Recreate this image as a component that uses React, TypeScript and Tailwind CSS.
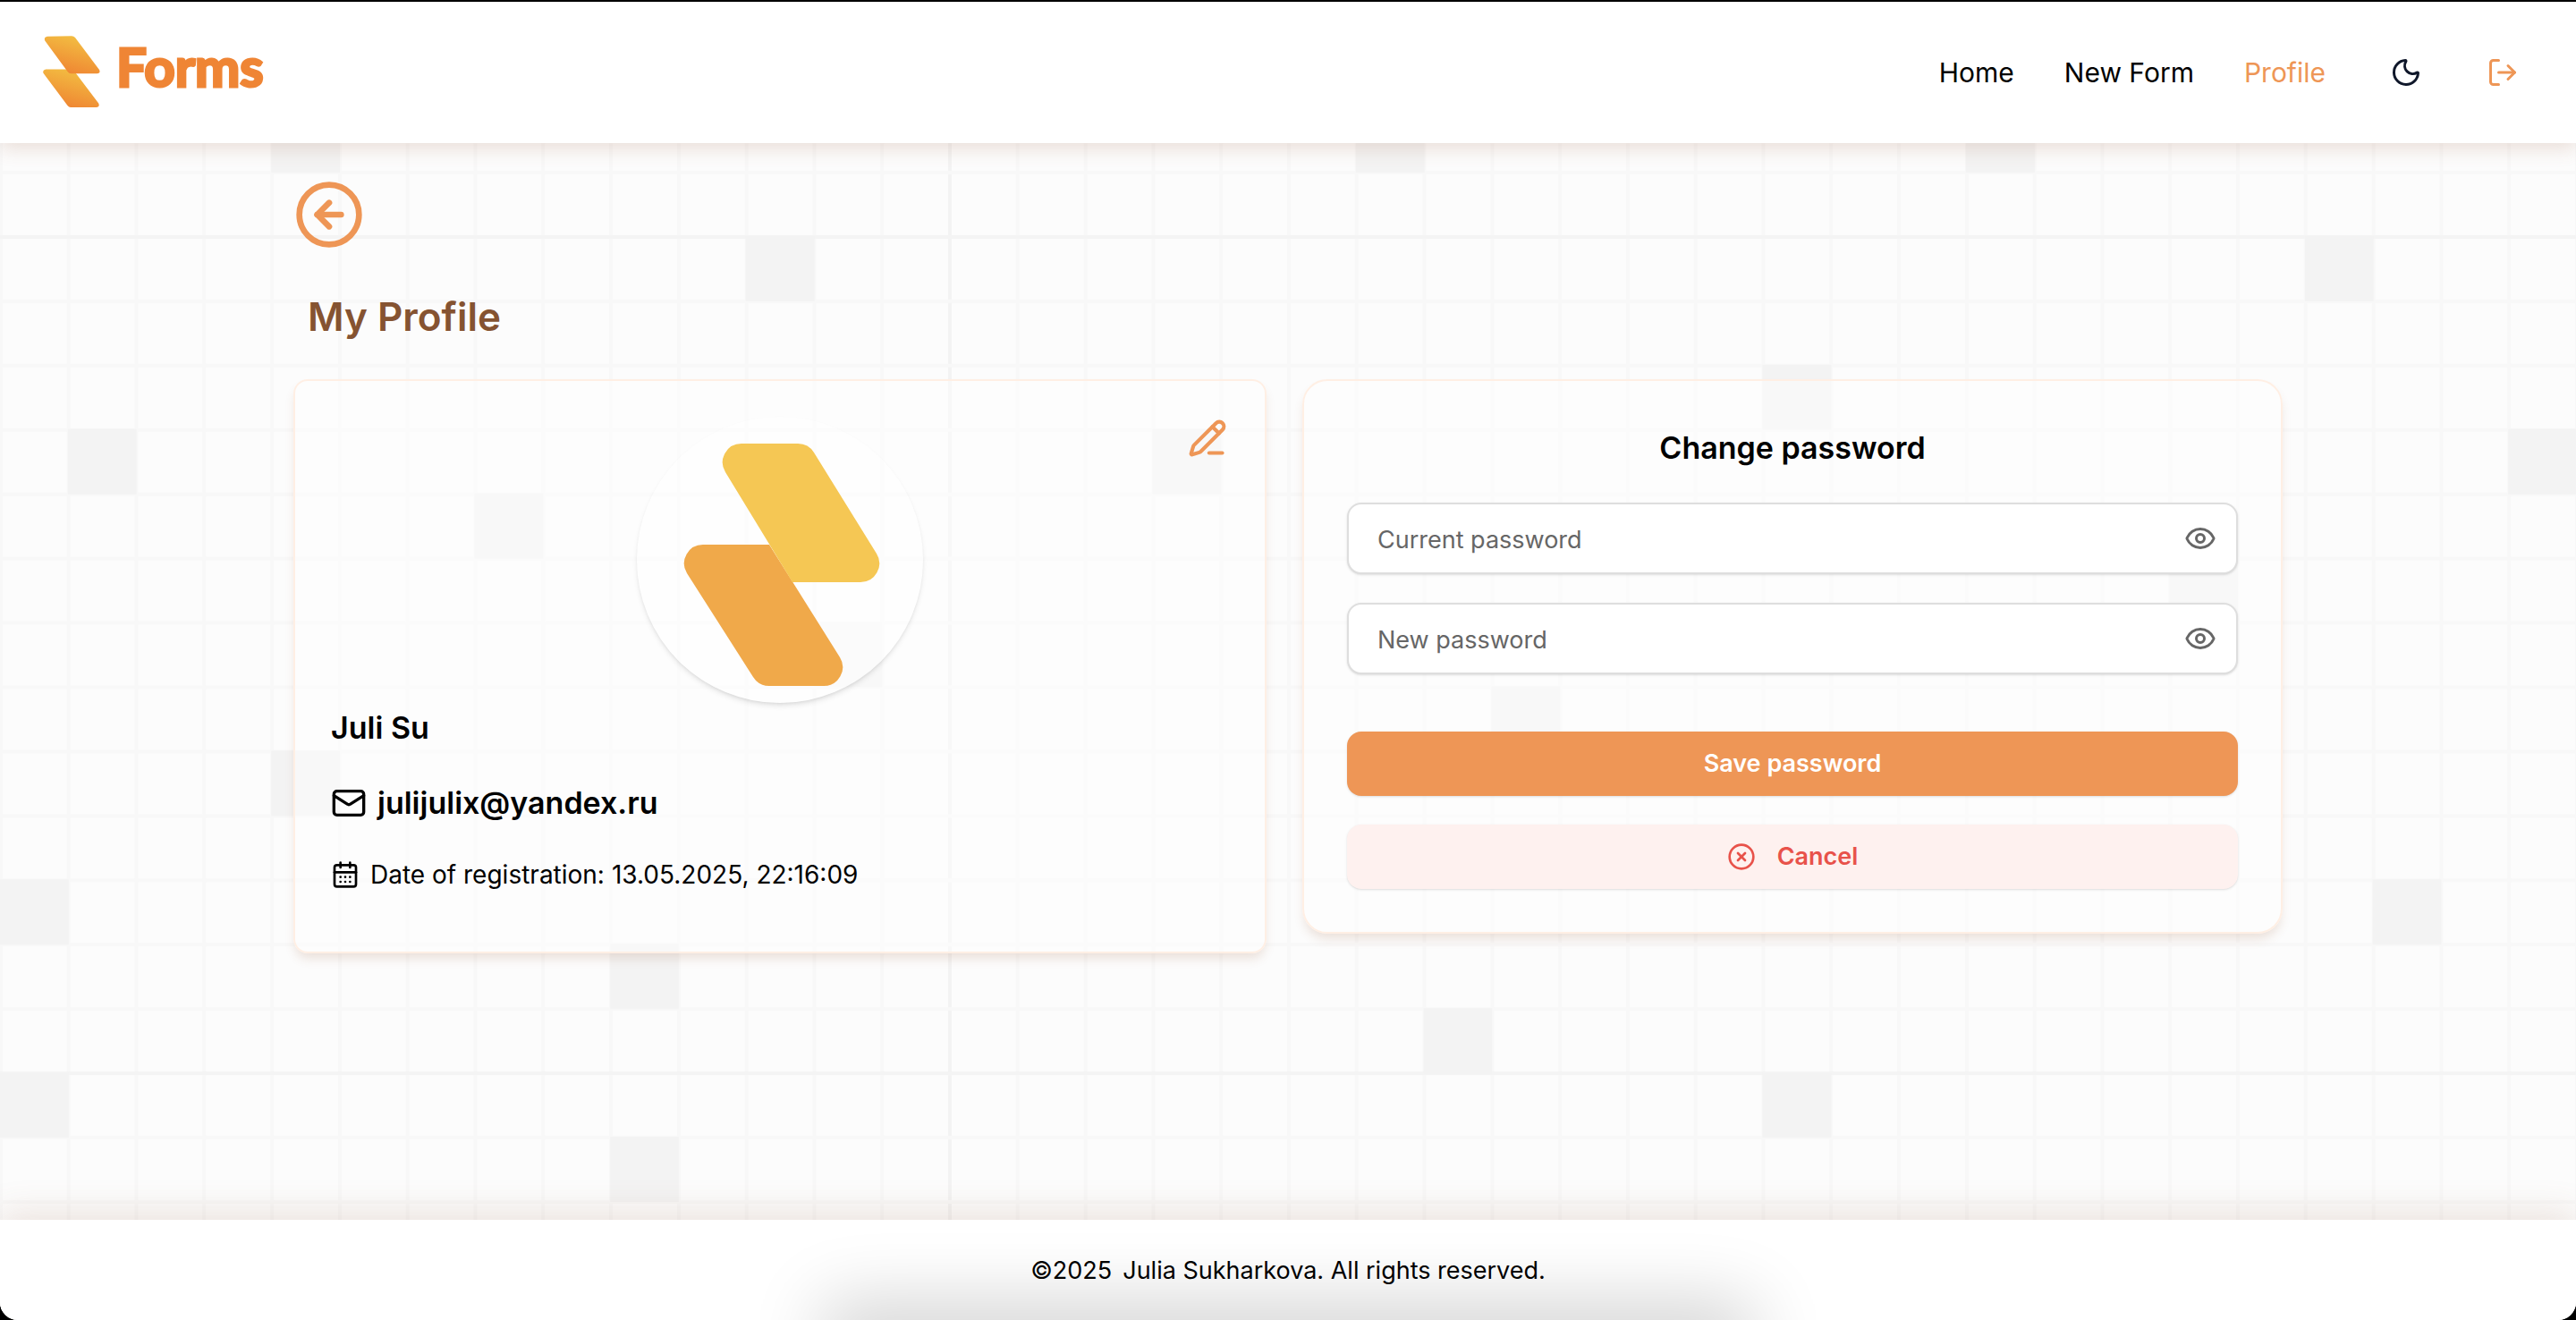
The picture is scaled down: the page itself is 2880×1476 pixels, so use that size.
import { useState } from "react";
import {
  CalendarDays,
  CircleArrowLeft,
  CircleX,
  Eye,
  LogOut,
  Moon,
  PencilLine,
} from "lucide-react";

const CELL_W = 75.79;
const CELL_H = 71.94;
const GRID_TOP = 190;

// Shaded squares of the backdrop as [column, row].
const SHADED: [number, number][] = [
  [4, -1], [20, -1], [29, -1],
  [11, 1], [34, 1],
  [26, 3],
  [1, 4], [17, 4], [37, 4],
  [7, 5],
  [32, 6],
  [12, 7],
  [22, 8],
  [4, 9],
  [0, 11], [35, 11],
  [9, 12],
  [21, 13],
  [0, 14], [26, 14],
  [9, 15],
];

function GridBackdrop() {
  const columns = Array.from({ length: 39 }, (_, i) => i);
  const rows = Array.from({ length: 17 }, (_, i) => i);
  return (
    <svg
      aria-hidden="true"
      viewBox="0 0 2880 1476"
      preserveAspectRatio="xMidYMin slice"
      className="pointer-events-none absolute inset-0 h-full w-full"
    >
      {columns.map((c) => (
        <rect key={c} x={c * CELL_W - 1} y={0} width={4} height={1476} fill={c === 14 ? "#f3f3f3" : "#f8f8f8"} />
      ))}
      {rows.map((r) => (
        <rect
          key={r}
          x={0}
          y={GRID_TOP + r * CELL_H - 1}
          width={2880}
          height={4}
          fill={r === 1 || r === 14 ? "#f4f4f4" : "#f8f8f8"}
        />
      ))}
      {SHADED.map(([c, r]) => (
        <rect
          key={`${c}-${r}`}
          x={c * CELL_W}
          y={GRID_TOP + r * CELL_H}
          width={CELL_W + 1}
          height={CELL_H + 1}
          fill="#f3f3f3"
        />
      ))}
    </svg>
  );
}

function LogoMark() {
  return (
    <svg viewBox="0 0 64 80" className="h-20 w-16" aria-hidden="true">
      <defs>
        <linearGradient id="mark-fill" x1="0.75" y1="0" x2="0.35" y2="1">
          <stop offset="0" stopColor="#f3c243" />
          <stop offset="1" stopColor="#ef8432" />
        </linearGradient>
      </defs>
      <path
        d="M3.2 37.5H31.5Q33.6 37.6 35 39.5L62.200 75.500Q64 79.500 60 80H31Q29 80 27.500 78L0.600 42Q-1 38.500 3.200 37.500Z"
        fill="url(#mark-fill)"
      />
      <path
        d="M5 .8L32 .2Q34.500 .2 36 2L63 38Q64.800 42 60.500 42.300H31.500Q29 42.200 27.500 40L2.200 5.500Q.8 1.500 5 .8Z"
        fill="url(#mark-fill)"
      />
    </svg>
  );
}

function MailIcon() {
  return (
    <svg
      viewBox="0 0 24 24"
      fill="none"
      stroke="currentColor"
      strokeWidth="2"
      strokeLinecap="round"
      strokeLinejoin="round"
      className="size-10"
      aria-hidden="true"
    >
      <rect width="20" height="16" x="2" y="4" rx="2" />
      <path d="m22 7-8.970 5.700a1.940 1.940 0 0 1-2.060 0L2 7" />
    </svg>
  );
}

function AvatarArt() {
  return (
    <svg viewBox="0 0 320 320" className="h-full w-full" role="img" aria-label="Avatar">
      <path
        d="M74 143H148L227 269A21 21 0 0 1 209 301H148A21 21 0 0 1 130 291L56 175A21 21 0 0 1 74 143Z"
        fill="#f0a94a"
      />
      <path
        d="M117 30H180A21 21 0 0 1 198 40L268 153A21 21 0 0 1 250 185H174L99 62A21 21 0 0 1 117 30Z"
        fill="#f5c754"
      />
    </svg>
  );
}

function PasswordField({ id, label }: { id: string; label: string }) {
  const [visible, setVisible] = useState(false);
  return (
    <div className="flex h-20 items-center rounded-2xl border-2 border-[#dedede] bg-white pr-[22px] shadow-sm">
      <input
        id={id}
        type={visible ? "text" : "password"}
        aria-label={label}
        placeholder={label}
        className="h-full min-w-0 flex-1 bg-transparent pt-[2px] pl-8 text-[27px] text-black outline-none placeholder:text-[#666666]"
      />
      <button
        type="button"
        aria-label={visible ? "Hide password" : "Show password"}
        onClick={() => setVisible(!visible)}
        className="text-[#666666]"
      >
        <Eye className="size-9" />
      </button>
    </div>
  );
}

const CARD =
  "border-2 border-[#ffefe4] bg-[#fefefe]/50 shadow-[0_8px_12px_-2px_rgba(150,85,50,0.16)]";

export default function App() {
  return (
    <div className="bg-black pt-[2px] font-['Inter','Liberation_Sans',sans-serif] text-black">
      <div className="relative flex min-h-[calc(100vh-2px)] flex-col overflow-hidden rounded-b-[20px] bg-[#fcfcfc]">
        <GridBackdrop />

        <header className="relative flex h-[158px] items-center justify-between bg-white pr-16 pl-12 shadow-[0_6px_20px_rgba(150,85,50,0.18)]">
          <a href="#home" className="flex items-center gap-[18px] pb-[2px]">
            <LogoMark />
            <span className="pb-3 font-['Lato',sans-serif] text-[60px] leading-none font-bold text-[#ef8535] [-webkit-text-stroke:3px_#ef8535] [stroke-linejoin:round]">
              Forms
            </span>
          </a>
          <nav className="flex items-center text-[30px]">
            <a href="#home">Home</a>
            <a href="#new" className="ml-14">New Form</a>
            <a href="#profile" className="ml-14 text-[#ee9656]">Profile</a>
            <button type="button" aria-label="Dark mode" className="ml-[72px] text-[#0f172a]">
              <Moon className="size-9" />
            </button>
            <button type="button" aria-label="Log out" className="ml-[72px] text-[#ee9656]">
              <LogOut className="size-9" />
            </button>
          </nav>
        </header>

        <main className="relative mx-auto w-full max-w-[2224px] flex-1 pt-10">
          <button type="button" aria-label="Back" className="block text-[#ee9656]">
            <CircleArrowLeft className="size-20" />
          </button>
          <h1 className="mt-11 ml-4 text-[44px] leading-[60px] font-semibold text-[#855331]">My Profile</h1>

          <div className="mt-10 grid grid-cols-[136fr_137fr] items-start gap-10">
            <section className={`relative rounded-2xl px-10 pt-10 pb-[66px] ${CARD}`}>
              <button type="button" aria-label="Edit profile" className="absolute top-[42px] right-[42px] text-[#ee9656]">
                <PencilLine className="size-11" strokeWidth={2.25} />
              </button>
              <div className="mx-auto size-80 overflow-hidden rounded-full bg-white/40 shadow-md">
                <AvatarArt />
              </div>
              <h2 className="mt-1 text-[34px] leading-[48px] font-semibold">Juli Su</h2>
              <p className="mt-9 flex items-center gap-3 text-[34px] leading-[48px] font-semibold">
                <MailIcon />
                julijulix@yandex.ru
              </p>
              <p className="mt-9 flex items-center text-[28px] leading-10">
                <CalendarDays className="size-8" />
                <span className="ml-3">Date of registration:</span>
                <span className="ml-2">13.05.2025, 22:16:09</span>
              </p>
            </section>

            <section className={`rounded-[28px] px-12 pb-12 ${CARD}`}>
              <h2 className="mt-12 text-center text-[34px] leading-[54px] font-semibold">Change password</h2>
              <form className="mt-[34px] flex flex-col gap-8" onSubmit={(e) => e.preventDefault()}>
                <PasswordField id="current-password" label="Current password" />
                <PasswordField id="new-password" label="New password" />
                <button
                  type="submit"
                  className="mt-8 h-[72px] rounded-2xl bg-[#ee9656] text-[27px] font-semibold text-white shadow-sm"
                >
                  Save password
                </button>
                <button
                  type="button"
                  className="flex h-[72px] items-center justify-center gap-6 rounded-2xl bg-[#fef1ef] text-[27px] font-semibold text-[#e8524a] shadow-sm"
                >
                  <CircleX className="size-8" />
                  Cancel
                </button>
              </form>
            </section>
          </div>
        </main>

        <footer className="relative flex h-28 items-center justify-center bg-white pt-[2px] text-[27px] shadow-[0_-8px_36px_rgba(150,95,60,0.16)]">
          <div
            aria-hidden="true"
            className="pointer-events-none absolute top-full left-1/2 h-10 w-[1000px] -translate-x-1/2 shadow-[0_0_80px_20px_rgba(0,0,0,0.18)]"
          />
          <p className="relative">
            ©2025<span className="ml-3">Julia Sukharkova. All rights reserved.</span>
          </p>
        </footer>
      </div>
    </div>
  );
}
